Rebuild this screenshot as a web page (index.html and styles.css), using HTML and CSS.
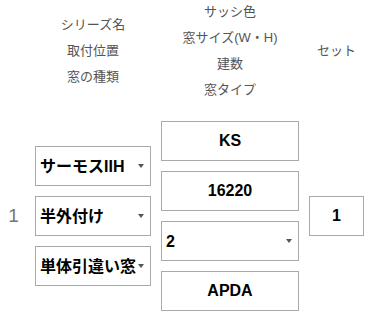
FILE: index.html
```html
<!DOCTYPE html>
<html lang="ja">
<head>
<meta charset="utf-8">
<title>窓</title>
<link rel="stylesheet" href="styles.css">
</head>
<body>
<div class="sheet">
  <div class="head-cell"></div>
  <div class="head-cell">
    <div>シリーズ名</div>
    <div>取付位置</div>
    <div>窓の種類</div>
  </div>
  <div class="head-cell">
    <div>サッシ色</div>
    <div>窓サイズ(W・H)</div>
    <div>建数</div>
    <div>窓タイプ</div>
  </div>
  <div class="head-cell">
    <div>セット</div>
  </div>

  <div class="row-num">1</div>
  <div class="stack">
    <div class="select"><select><option>サーモスIIH</option></select></div>
    <div class="select"><select><option>半外付け</option></select></div>
    <div class="select"><select><option>単体引違い窓</option></select></div>
  </div>
  <div class="stack">
    <input class="field" type="text" value="KS" readonly>
    <input class="field" type="text" value="16220" readonly>
    <div class="select"><select><option>2</option></select></div>
    <input class="field" type="text" value="APDA" readonly>
  </div>
  <div class="stack">
    <input class="field" type="text" value="1" readonly>
  </div>
</div>
</body>
</html>
```
FILE: styles.css
```css
html, body {
  margin: 0;
  padding: 0;
  background: #fff;
}
body {
  font-family: "Liberation Sans", "Noto Sans CJK JP", sans-serif;
}
.sheet {
  display: grid;
  grid-template-columns: 25px 116px 138px 55px;
  column-gap: 10px;
  row-gap: 18px;
  align-items: center;
  margin-top: -1px;
}
.head-cell {
  font-size: 13px;
  line-height: 26px;
  color: #555;
  text-align: center;
  white-space: nowrap;
}
.row-num {
  font-size: 19px;
  color: #777;
  text-align: center;
  padding-left: 2px;
}
.stack {
  display: flex;
  flex-direction: column;
  gap: 10px;
}
.select {
  position: relative;
}
.select::after {
  content: "";
  position: absolute;
  right: 7px;
  top: 50%;
  margin-top: -2px;
  border-left: 3.5px solid transparent;
  border-right: 3.5px solid transparent;
  border-top: 4px solid #555;
  pointer-events: none;
}
.select select,
.field {
  display: block;
  box-sizing: border-box;
  width: 100%;
  height: 40px;
  margin: 0;
  border: 1px solid #a9a9a9;
  border-radius: 0;
  background: #fff;
  color: #000;
  font-family: "Liberation Sans", "Noto Sans CJK JP", sans-serif;
  font-size: 16px;
  font-weight: bold;
  outline: none;
}
.select select {
  -webkit-appearance: none;
  appearance: none;
  padding: 0 0 0 4px;
}
.field {
  padding: 0;
  text-align: center;
}
```
